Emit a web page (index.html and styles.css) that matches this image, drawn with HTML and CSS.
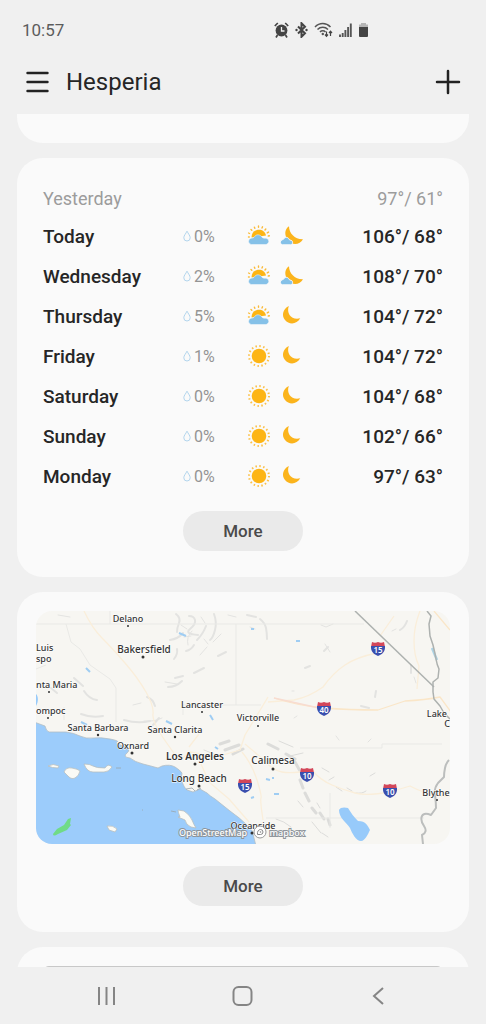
FILE: index.html
```html
<!DOCTYPE html>
<html lang="en">
  <head>
    <meta charset="UTF-8" />
    <meta name="viewport" content="width=device-width, initial-scale=1.0" />
    <title>Weather</title>
    <link rel="stylesheet" href="styles.css">
  </head>
  <body>
    <!-- shared weather icons -->
    <svg class="sprite" aria-hidden="true">
      <symbol id="drop" viewBox="0 0 8 12">
        <path d="M4 1.200C3 3.400.8 5.600.8 7.800a3.200 3.200 0 0 0 6.400 0C7.200 5.600 5 3.400 4 1.200z" fill="none" stroke="#b2d5ed" stroke-width="1" />
      </symbol>
      <symbol id="sun" viewBox="0 0 24 24">
        <circle cx="12" cy="12" r="7.300" fill="#fdb515" />
        <circle cx="12" cy="12" r="10" fill="none" stroke="#fbc14a" stroke-width="2" stroke-dasharray="1.500 2.427" />
      </symbol>
      <symbol id="cloudy" viewBox="0 0 24 24">
        <path d="M4.500 13.500C4.500 4 17.500 3 19 11.500z" fill="#fdb515" />
        <path d="M2.500 9.500L1.600 9M4.800 6.300L4 5.500M7.800 4.300L7.400 3.200M11.500 3.300V2M15 4l.5-1.200M18 6l.8-1M20.300 8.800l1.200-.7M21.300 12l1-.2M1.500 13h.8" stroke="#fbbb38" stroke-width="1.400" stroke-linecap="round" />
        <path d="M4.500 20.500a3.200 3.200 0 0 1-.5-6.300c1.700 0 2.400-.2 3.400-1.400 2-3 6-2.500 7.800.6 1.500.9 2.500.8 4 .8a3.200 3.200 0 0 1 0 6.300z" fill="#85c1e8" stroke="#fafafa" stroke-width=".5" />
      </symbol>
      <symbol id="moon" viewBox="0 0 24 24">
        <path d="M9.800 2C3.500 5 2.500 12 6 16c4 5 12 4.500 15.200-1.700C13 16.500 7 10 9.800 2z" fill="#fbb41c" />
      </symbol>
      <symbol id="moon-cloud" viewBox="0 0 24 24">
        <path d="M10 2.300C5 5.500 5.500 12 9 16.500c4 5 12 4.500 15-1.300C16 15.500 10 9.500 10 2.300z" fill="#fbb41c" />
        <path d="M3.200 20.800a2.600 2.600 0 0 1 0-5c.9 0 1.300-.4 1.900-1.300 1.500-2 4.300-1.200 5.100 1 .4.700 1.300.6 1.900.8 2.200.5 1.800 4.500-.4 4.500z" fill="#85c1e8" stroke="#fafafa" stroke-width="1" />
      </symbol>
    </svg>

    <div class="status-bar">
      <span class="clock">10:57</span>
      <div class="status-icons">
        <svg width="15" height="16" viewBox="0 0 15 16" aria-label="Alarm">
          <circle cx="7.500" cy="8.500" r="5.900" fill="#444" />
          <path d="M7.500 5v4h3" fill="none" stroke="#f0f0f0" stroke-width="1.300" />
          <path d="M.8 4l3-3M14.200 4l-3-3M3.500 13L2 15.500M11.500 13l1.500 2.500" stroke="#444" stroke-width="1.700" />
        </svg>
        <svg width="13" height="16" viewBox="0 0 13 16" aria-label="Bluetooth">
          <path d="M3 4.500l7 6.800-3.500 3.500V1.200L10 4.700l-7 6.800" fill="none" stroke="#444" stroke-width="2" />
          <circle cx="1.500" cy="8" r="1.200" fill="#444" />
          <circle cx="11.500" cy="8" r="1.200" fill="#444" />
        </svg>
        <svg width="19" height="16" viewBox="0 0 19 16" aria-label="Wi-Fi">
          <path d="M1 5c4.500-4.700 11-4.700 15.500 0M3.500 7.500c3-3 7.500-3 10.500 0M6 10c1.500-1.600 4-1.600 5.500 0" fill="none" stroke="#555" stroke-width="1.500" />
          <circle cx="8.800" cy="12" r="1.200" fill="#555" />
          <path d="M12.500 9.500V14M11 12.500l1.500 1.800 1.500-1.800M16.500 14V9.500M15 11l1.500-1.800L18 11" fill="none" stroke="#444" stroke-width="1.200" />
        </svg>
        <svg width="13" height="16" viewBox="0 0 13 16" aria-label="Signal">
          <path d="M1 15v-2.500M3.700 15v-4M6.400 15V8M9.100 15V5M11.800 15V1.500" stroke="#555" stroke-width="1.900" />
        </svg>
        <svg width="11" height="16" viewBox="0 0 11 16" aria-label="Battery">
          <path d="M3 1h5v1.500h2V5H1V2.500h2z" fill="#b5b5b5" />
          <path d="M1 5h9v9a1 1 0 0 1-1 1H2a1 1 0 0 1-1-1z" fill="#444" />
        </svg>
      </div>
    </div>

    <header class="app-bar">
      <button class="icon-btn" type="button" aria-label="Menu">
        <svg width="24" height="24" viewBox="0 0 24 24">
          <path d="M2.500 3h20M2.500 12h20M2.500 21h20" stroke="#222" stroke-width="2.400" stroke-linecap="round" />
        </svg>
      </button>
      <h1>Hesperia</h1>
      <button class="icon-btn" type="button" aria-label="Add location">
        <svg width="26" height="26" viewBox="0 0 26 26">
          <path d="M13 2v22M2 13h22" stroke="#222" stroke-width="2.500" stroke-linecap="round" />
        </svg>
      </button>
    </header>

    <main class="feed">
      <section class="card card-above"></section>

      <section class="card forecast">
        <table>
          <tbody>
            <tr class="past">
              <th scope="row">Yesterday</th>
              <td class="rain"></td>
              <td class="sky"></td>
              <td class="temp">97°/ 61°</td>
            </tr>
            <tr>
              <th scope="row">Today</th>
              <td class="rain"><svg><use href="#drop" /></svg>0%</td>
              <td class="sky"><svg><use href="#cloudy" /></svg><svg><use href="#moon-cloud" /></svg></td>
              <td class="temp">106°/ 68°</td>
            </tr>
            <tr>
              <th scope="row">Wednesday</th>
              <td class="rain"><svg><use href="#drop" /></svg>2%</td>
              <td class="sky"><svg><use href="#cloudy" /></svg><svg><use href="#moon-cloud" /></svg></td>
              <td class="temp">108°/ 70°</td>
            </tr>
            <tr>
              <th scope="row">Thursday</th>
              <td class="rain"><svg><use href="#drop" /></svg>5%</td>
              <td class="sky"><svg><use href="#cloudy" /></svg><svg><use href="#moon" /></svg></td>
              <td class="temp">104°/ 72°</td>
            </tr>
            <tr>
              <th scope="row">Friday</th>
              <td class="rain"><svg><use href="#drop" /></svg>1%</td>
              <td class="sky"><svg><use href="#sun" /></svg><svg><use href="#moon" /></svg></td>
              <td class="temp">104°/ 72°</td>
            </tr>
            <tr>
              <th scope="row">Saturday</th>
              <td class="rain"><svg><use href="#drop" /></svg>0%</td>
              <td class="sky"><svg><use href="#sun" /></svg><svg><use href="#moon" /></svg></td>
              <td class="temp">104°/ 68°</td>
            </tr>
            <tr>
              <th scope="row">Sunday</th>
              <td class="rain"><svg><use href="#drop" /></svg>0%</td>
              <td class="sky"><svg><use href="#sun" /></svg><svg><use href="#moon" /></svg></td>
              <td class="temp">102°/ 66°</td>
            </tr>
            <tr>
              <th scope="row">Monday</th>
              <td class="rain"><svg><use href="#drop" /></svg>0%</td>
              <td class="sky"><svg><use href="#sun" /></svg><svg><use href="#moon" /></svg></td>
              <td class="temp">97°/ 63°</td>
            </tr>
          </tbody>
        </table>
        <button class="more" type="button">More</button>
      </section>

      <section class="card radar">
        <svg class="map" viewBox="0 0 414 233" role="img" aria-label="Map of Southern California">
          <defs>
            <g id="shield">
              <path d="M-6-7Q-3-5.500 0-7 3-5.500 6-7L7-2H-7z" fill="#d3475a" />
              <path d="M-7-3H7C7.500 2.500 4 5.500 0 7-4 5.500-7.500 2.500-7-3z" fill="#3a4fae" />
            </g>
          </defs>
          <rect width="414" height="233" fill="#f7f6f2" />

          <!-- hills -->
          <g fill="none" stroke="#e3e3e1" stroke-width="2" stroke-linecap="round" stroke-linejoin="round">
            <path d="M140 3q5 4 3 9t-2 9M153 5q5 0 6 4t-5 9 8 6M170 15q-3 8-9 14M178 3q3 8 1 16t-5 10M134 29q8-1 13-7M138 48q4-5 3-10M150 40q5-1 8-6M182 45l8-4M158 62l10-5M132 76q8 0 14-6M147 65l-8 2M111 86q6 2 8 9M88 109q14 4 26 1M45 103q10 4 22 2M48 80q5 8 13 9M38 67l9 8M15 77l6 5M123 107l-6 7" />
            <path d="M156 20q-6 6-4 14M177 31l8-8M129 71l12 2M97 94l8-2M164 44l7-8M108 110q10 1 18-3M145 14l6 4M165 6l4 6M148 26l7-1M168 28l4 5M34 6l-12-2M200 6l-8-2" stroke-width="1" />
            <path d="M224 8q5 4 6 9t1 11M211 4l9 2M288 40l4-4M269 57l5-2M371 10q-2 6-7 9M375 54v8M340 80l-1 6M325 95l8 2" />
            <path d="M285 14l5 2 7-3M289 33l5 8M258 107l3-2M332 131l3-3M214 16l5 2M256 80h2M356 20l4-2M300 125l3 4M378 66l2 6" stroke-width="1" />
          </g>
          <g fill="none" stroke="#dcdcda" stroke-width="3" stroke-linecap="round" stroke-linejoin="round">
            <path d="M184 133l9-3M189 139l14-5M197 143l10-5M232 133l10 5M250 143l9 5M259 151l5 9M264 169l3 8M269 182l4 8M276 197l4 5M284 202l4 6M292 208l2 6" />
            <path d="M240 208q8 2 15 8M276 211l9 11M286 222l6 4M286 157l7 4M293 169l5-3M320 182q6 1 10-2M311 177l5 3M168 139l10 4M254 145l13-3M334 165l5-3M262 190l5 6M281 192l3 5M300 176l6 4M243 130l14 6" stroke-width="1" />
          </g>

          <!-- county lines -->
          <path d="M0 13h74V0M74 13h254M200 13v81h-53v10M30 13l5 18 9 7 10 16 20 14 6 9v34M28 109v-13M264 137h82v-4h60M294 217v-35M230 207h158M225 94h-25M0 58l10-4" fill="none" stroke="#e9e9e6" />

          <!-- highways -->
          <g fill="none" stroke="#faeeda" stroke-width="1.300" stroke-linejoin="round">
            <path d="M48 0q8 17 18 27t23 25 21 29 7 22 13 28 14 18M144 149l10-8 26 5 24-7 5-15 23-38M165 153l8 18 20 17 20 23M209 133l19 16q8 10 18 12t30-2q8 10 20 15t23 8 35-1l20-6q15 8 30 10h18" />
            <path d="M206 141q10 12 15 28t4 18 2 22M153 136l10-13M341 42q-20 4-32 12t-22 22q-14 10-29 13l-26 2M344 25l14-20M384 0q-6 15-6 30t5 25l-2 23" />
            <path d="M238 87q25 8 50 10t54 2l27-9q20-1 35-4l11 15M398 0l16 19" stroke="#fae6c8" />
            <path d="M238 87l45 10" stroke="#f8dcd0" />
          </g>

          <!-- sea, lakes and river -->
          <g fill="#9cccfb" stroke="#b3bec4" stroke-width=".8" stroke-linejoin="round">
            <path d="M-2 111l11 4q1 5 4 6h17q8 1 14 4t13 2 17 1 7 3 6 4 4 7 3 5q5 4 13 6t15 4l4-2q8-2 13 1t7 6l-1 6q3 9 6 11l6 2 7-3 7 4q3 3 8 6l15 12q10 7 17 14t6 9l4 16H-2z" />
          </g>
          <path d="M303 199c1-3 6-3 9-2 3 5 6 9 10 13 8 0 10 5 12 9-2 4-5 11-9 11-5 0-9-8-11-13-4-6-11-10-11-18zM0 83c3 3 2 9 0 12z" fill="#97cafa" />
          <path d="M50 57l4 4M143 22l7 3M179 136l3 2M45 111l6 3M130 110l6 3M174 104l3 5M230 168l4 1M236 167h2M238 183h5M218 186l-3 1M260 30h4M215 18h3" stroke="#9fcdf3" stroke-width="2" />
          <path d="M396 37l5 12" stroke="#acd3e5" stroke-width="2.500" />
          <g fill="#fafaf5" stroke="#b8bfc0" stroke-width=".8" stroke-linejoin="round">
            <path d="M12 155q5-3 11 0l-1 2q-6 0-10-2zM28 161q2-5 8-4t8 3q-1 5-5 7t-8-3zM48 153q6 0 9 2t12 2q3-5 7-1-3 5-8 5t-11 0-9-8zM142 206h2q-2-5-2-7l6 1q6 4 8 9t4 8l-5-1q-5-2-6-7zM71 215q6-1 10 3l-2 3-6-2z" />
            <path d="M135 200l5 1M150 178l6-1 3 3M161 179l4-2M106 199h1M80 157h5" fill="none" stroke="#9aa6ac" />
          </g>
          <path d="M17 223l4-5 7-4 4-6 3-1-1 6 1 1-4 5-9 4q-5 3-5 0zM30 204l4 2z" fill="#70db87" />
          <path d="M413 149q-3 3-4 8t-1 9l-6 6q-4 5-3 12t1 13l-5 7q-7-3-9 1t2 10-2 9l1 9" fill="none" stroke="#bcbebd" stroke-width="2" stroke-linejoin="round" />
          <path d="M319 0l79 76" fill="none" stroke="#adb1af" stroke-width="1.500" />
          <path d="M391 0l4 5-2 8 1 12 3 9q2 8 3 14t3 10l-1 9-5 4v10l1 7 6 7 4 7 6 6" fill="none" stroke="#adb1af" stroke-width="1.500" stroke-linejoin="round" />

          <!-- interstates -->
          <g class="shields">
            <use href="#shield" x="342" y="38" /><text x="342" y="42">15</text>
            <use href="#shield" x="288" y="98" /><text x="288" y="102">40</text>
            <use href="#shield" x="209" y="175" /><text x="209" y="179">15</text>
            <use href="#shield" x="271" y="164" /><text x="271" y="168">10</text>
            <use href="#shield" x="354" y="180" /><text x="354" y="184">10</text>
          </g>

          <!-- towns -->
          <g fill="#333">
            <circle cx="92" cy="15" r="1" /><circle cx="107" cy="46" r="1.500" /><circle cx="13" cy="81" r="1" />
            <circle cx="12" cy="107" r="1" /><circle cx="166" cy="101" r="1" /><circle cx="222" cy="115" r="1" />
            <circle cx="62" cy="124" r="1.200" /><circle cx="139" cy="126" r="1.200" /><circle cx="96" cy="142" r="1.500" />
            <circle cx="159" cy="153" r="1.500" /><circle cx="163" cy="175" r="1.500" /><circle cx="237" cy="158" r="1.500" />
            <circle cx="401" cy="189" r="1" /><circle cx="216" cy="222" r="1.500" />
          </g>
          <g class="town">
            <text x="92" y="11">Delano</text>
            <text x="166" y="97">Lancaster</text>
            <text x="222" y="110">Victorville</text>
            <text x="62" y="120">Santa Barbara</text>
            <text x="139" y="122">Santa Clarita</text>
            <text x="97" y="138">Oxnard</text>
            <text x="400" y="185">Blythe</text>
            <text x="217" y="218">Oceanside</text>
          </g>
          <g class="town town-left">
            <text x="0" y="40">Luis</text>
            <text x="0" y="51">spo</text>
            <text x="0" y="77">nta Maria</text>
            <text x="0" y="103">ompoc</text>
          </g>
          <g class="town town-right">
            <text x="411" y="106">Lake</text>
            <text x="414" y="116">C</text>
          </g>
          <g class="town city">
            <text x="108" y="42">Bakersfield</text>
            <text x="163" y="171">Long Beach</text>
            <text x="237" y="153">Calimesa</text>
          </g>
          <g class="town metro">
            <text x="159" y="149">Los Angeles</text>
          </g>

          <g class="credit">
            <text x="177" y="225">OpenStreetMap</text>
            <circle cx="224" cy="221" r="6" fill="#fff" stroke="#999" />
            <path d="M221.500 223.500c-.5-3 1-5 3-5a2.500 2.500 0 0 1 0 5z" fill="none" stroke="#888" />
            <circle cx="224.500" cy="221" r=".8" fill="#888" />
            <text x="251" y="225">mapbox</text>
          </g>
        </svg>
        <button class="more" type="button">More</button>
      </section>

      <section class="card card-below">
        <div class="preview"></div>
      </section>
    </main>

    <nav class="nav-bar">
      <button class="icon-btn" type="button" aria-label="Recent apps">
        <svg width="24" height="24" viewBox="0 0 24 24">
          <path d="M3 3v18M10.500 3v18M18 3v18" stroke="#858585" stroke-width="2" />
        </svg>
      </button>
      <button class="icon-btn" type="button" aria-label="Home">
        <svg width="24" height="24" viewBox="0 0 24 24">
          <rect x="2.500" y="3" width="18" height="18" rx="5" fill="none" stroke="#858585" stroke-width="2" />
        </svg>
      </button>
      <button class="icon-btn" type="button" aria-label="Back">
        <svg width="24" height="24" viewBox="0 0 24 24">
          <path d="M17 4l-9 8 9 8" fill="none" stroke="#858585" stroke-width="2" />
        </svg>
      </button>
    </nav>
  </body>
</html>
```
FILE: styles.css
```css
* {
  box-sizing: border-box;
}
body {
  display: flex;
  flex-direction: column;
  height: 100vh;
  margin: 0;
  background: #f0f0f0;
  color: #262626;
  font-family: Roboto, "Liberation Sans", sans-serif;
}
svg {
  display: block;
  flex: none;
}
button {
  border: none;
  font-family: inherit;
  cursor: pointer;
}
.sprite {
  position: absolute;
  width: 0;
  height: 0;
}
.status-bar {
  display: flex;
  flex: none;
  align-items: center;
  justify-content: space-between;
  height: 60px;
  padding: 0 24% 0 22px;
}
.clock {
  color: #5c5c5c;
  font-size: 17px;
}
.status-icons {
  display: flex;
  gap: 6px;
}
.app-bar {
  display: flex;
  flex: none;
  align-items: center;
  height: 54px;
  padding: 0 25px 10px;
}
.app-bar h1 {
  flex: 1;
  margin: 0 0 0 17px;
  font-size: 24px;
  font-weight: 400;
}
.icon-btn {
  padding: 0;
  background: none;
}
.feed {
  display: flex;
  flex: 1;
  flex-direction: column;
  gap: 15px;
  min-height: 0;
  padding: 0 17px;
  overflow: hidden;
}
.card {
  flex: none;
  border-radius: 26px;
  background: #fafafa;
}
.card-above {
  height: 29px;
  border-radius: 0 0 26px 26px;
}
.forecast {
  padding: 22px 26px 26px;
}
.radar {
  padding: 19px 19px 26px;
}
.card-below {
  padding: 19px 26px;
}
.preview {
  height: 80px;
  border-radius: 6px;
  background: #c8c8c8;
}
table {
  width: 100%;
  border-collapse: collapse;
  table-layout: fixed;
}
tr {
  height: 40px;
}
th,
td {
  padding: 0;
  font-size: 19px;
  font-weight: 500;
  text-align: left;
}
th {
  width: 35%;
}
.past {
  height: 36px;
}
.past th,
.past .temp {
  color: #9c9c9c;
  font-size: 18px;
  font-weight: 400;
}
.rain {
  width: 16%;
  color: #949494;
  font-size: 16px;
  font-weight: 400;
}
.rain svg {
  display: inline-block;
  width: 8px;
  height: 12px;
  margin-right: 3px;
}
.sky {
  width: 16%;
}
.sky svg {
  display: inline-block;
  width: 24px;
  height: 24px;
  margin-right: 8px;
  vertical-align: middle;
}
.temp {
  text-align: right;
}
.more {
  display: block;
  width: 120px;
  height: 40px;
  margin: 15px auto 0;
  border-radius: 20px;
  background: #eaeaea;
  color: #4a4a4a;
  font-size: 17px;
  font-weight: 500;
}
.radar .more {
  margin-top: 22px;
}
.map {
  width: 100%;
  height: auto;
  border-radius: 16px;
  font-family: "Noto Sans", "Open Sans", sans-serif;
}
.shields text {
  fill: #fff;
  font-size: 8px;
  font-weight: 600;
  text-anchor: middle;
}
.town text {
  fill: #333;
  stroke: #fff;
  stroke-width: 1px;
  paint-order: stroke;
  font-size: 9px;
  font-weight: 500;
  text-anchor: middle;
}
.town-left text {
  text-anchor: start;
}
.town-right text {
  text-anchor: end;
}
.city text,
.metro text {
  font-size: 10px;
}
.metro text {
  font-weight: 600;
}
.credit text {
  fill: #fff;
  stroke: #8e959b;
  stroke-width: 2px;
  paint-order: stroke;
  font-size: 9px;
  font-weight: 500;
  text-anchor: middle;
}
.nav-bar {
  display: flex;
  flex: none;
  align-items: center;
  justify-content: space-between;
  height: 57px;
  padding: 0 96px;
}
```
